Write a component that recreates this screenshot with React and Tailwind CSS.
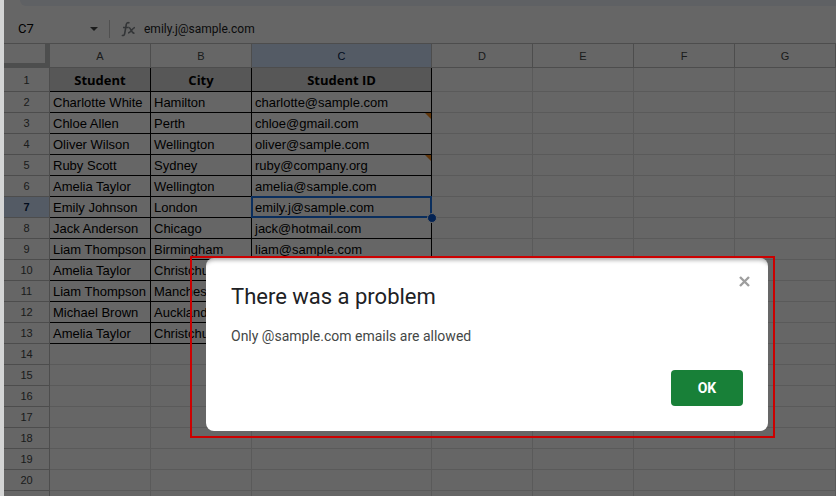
import { useState } from "react";

const columns = ["A", "B", "C", "D", "E", "F", "G"];

const students = [
  { name: "Charlotte White", city: "Hamilton", email: "charlotte@sample.com" },
  { name: "Chloe Allen", city: "Perth", email: "chloe@gmail.com", invalid: true },
  { name: "Oliver Wilson", city: "Wellington", email: "oliver@sample.com" },
  { name: "Ruby Scott", city: "Sydney", email: "ruby@company.org", invalid: true },
  { name: "Amelia Taylor", city: "Wellington", email: "amelia@sample.com" },
  { name: "Emily Johnson", city: "London", email: "emily.j@sample.com", selected: true },
  { name: "Jack Anderson", city: "Chicago", email: "jack@hotmail.com" },
  { name: "Liam Thompson", city: "Birmingham", email: "liam@sample.com" },
  { name: "Amelia Taylor", city: "Christchurch", email: "" },
  { name: "Liam Thompson", city: "Manchester", email: "" },
  { name: "Michael Brown", city: "Auckland", email: "" },
  { name: "Amelia Taylor", city: "Christchurch", email: "" },
];

const emptyRows = [14, 15, 16, 17, 18, 19, 20, ""];

const headCell = "border-r border-b border-[#c0c0c0] p-0 text-center text-[11px] leading-[16px]";
const filled = "border-r border-b border-black pt-[2px] pb-0 pl-[3px] text-[13px] leading-[16px] whitespace-nowrap";
const blank = "border-r border-b border-[#e1e1e1] p-0";

function RowNumber({ value, active }) {
  return (
    <th
      scope="row"
      className={
        active
          ? `${headCell} bg-[#d3e3fd] font-bold text-[#041e49]`
          : `${headCell} font-normal text-[#444746]`
      }
    >
      {value}
    </th>
  );
}

function Blanks({ count }) {
  return Array.from({ length: count }, (_, i) => <td key={i} className={blank}></td>);
}

function FormulaBar() {
  return (
    <div>
      <div className="ml-4 h-[6px] rounded-bl-full bg-[#edf2fa]"></div>
      <div className="flex h-[37px] items-center pt-[9px]">
        <div className="flex h-[18px] w-[106px] items-center border-r border-[#c7c7c7]">
          <input
            aria-label="Name box"
            defaultValue="C7"
            className="w-[70px] pl-[14px] font-[Roboto,sans-serif] text-[13px] text-black"
          />
          <button aria-label="Named ranges" className="ml-4">
            <svg width="8" height="4" viewBox="0 0 8 4" fill="#444746">
              <path d="M0 0h8L4 4z" />
            </svg>
          </button>
        </div>
        <svg className="ml-[11px]" width="15" height="16" viewBox="0 0 15 16" fill="none" stroke="#80868b" strokeWidth="1.600">
          <path d="M8.500 2C6.500 1 5.500 2 5.200 4L3.700 12.500C3.400 14.400 2.300 15 .8 14.200M2 6.500h5.500" />
          <path d="M7.500 6.500c2.500-.8 2.500 6.500 6 5.500M14 6.500c-2.500 0-4 5.500-7 5.500" />
        </svg>
        <input
          aria-label="Formula"
          defaultValue="emily.j@sample.com"
          className="ml-2 min-w-0 flex-1 font-[Roboto,sans-serif] text-[12px] text-[#202124]"
        />
      </div>
    </div>
  );
}

function Sheet() {
  return (
    <table className="w-full table-fixed border-separate border-spacing-0 border-t border-[#c0c0c0] text-black">
      <colgroup>
        <col className="w-[46px]" />
        <col className="w-[101px]" />
        <col className="w-[101px]" />
        <col className="w-[180px]" />
        <col className="w-[101px]" />
        <col className="w-[101px]" />
        <col className="w-[101px]" />
        <col />
      </colgroup>
      <thead>
        <tr className="h-6">
          <td className="border-r-[5px] border-b-[5px] border-[#c0c4c2] p-0"></td>
          {columns.map((c) => (
            <th
              key={c}
              scope="col"
              className={
                c === "C"
                  ? `${headCell} bg-[#d3e3fd] font-normal text-[#041e49]`
                  : `${headCell} font-normal text-[#444746]`
              }
            >
              {c}
            </th>
          ))}
        </tr>
      </thead>
      <tbody>
        <tr className="h-6">
          <RowNumber value={1} />
          {["Student", "City", "Student ID"].map((h) => (
            <td
              key={h}
              className="border-r border-b border-black bg-[#d9d9d9] p-0 text-center font-['Open_Sans',sans-serif] text-[13px] leading-[20px] font-bold"
            >
              {h}
            </td>
          ))}
          <Blanks count={4} />
        </tr>

        {students.map((s, i) => (
          <tr key={i} className="h-[21px]">
            <RowNumber value={i + 2} active={s.selected} />
            <td className={filled}>{s.name}</td>
            <td className={filled}>{s.city}</td>
            <td className={`${filled} relative`}>
              {s.email}
              {s.invalid && (
                <span className="absolute top-0 right-0 border-t-[6px] border-l-[6px] border-t-[#f28b20] border-l-transparent"></span>
              )}
              {s.selected && (
                <span className="absolute -inset-px z-10 border-2 border-[#1a73e8]">
                  <span className="absolute -right-[7px] -bottom-[7px] size-[10px] rounded-full border border-white bg-[#0b57d0]"></span>
                </span>
              )}
            </td>
            <Blanks count={4} />
          </tr>
        ))}

        {emptyRows.map((n) => (
          <tr key={n} className="h-[21px]">
            <RowNumber value={n} />
            <Blanks count={7} />
          </tr>
        ))}
      </tbody>
    </table>
  );
}

function ProblemDialog({ onClose }) {
  return (
    <div className="absolute top-[256px] left-[190px] z-30 w-[585px] border-2 border-[#cc0000] pr-[5px] pb-[5px] pl-[14px]">
      <div
        role="alertdialog"
        aria-labelledby="problem-title"
        className="relative rounded-lg bg-white p-[25px] font-[Roboto,sans-serif] shadow-[inset_0_6px_4px_-4px_rgba(0,0,0,0.35)]"
      >
        <button aria-label="Close" onClick={onClose} className="absolute top-[18px] right-[18px]">
          <svg width="11" height="11" viewBox="0 0 11 11" stroke="#9e9e9e" strokeWidth="2.400">
            <path d="M1 1l9 9M10 1l-9 9" />
          </svg>
        </button>
        <h2 id="problem-title" className="text-[22px] leading-[28px] text-[#202124]">
          There was a problem
        </h2>
        <p className="mt-[15px] text-[14px] leading-[20px] text-[#444746]">
          Only @sample.com emails are allowed
        </p>
        <div className="mt-6 flex justify-end">
          <button
            onClick={onClose}
            className="h-9 w-[72px] rounded bg-[#188038] text-[14px] font-bold text-white"
          >
            OK
          </button>
        </div>
      </div>
    </div>
  );
}

export default function App() {
  const [open, setOpen] = useState(true);

  return (
    <div className="relative flex h-screen overflow-hidden bg-white font-['Liberation_Sans',Arial,sans-serif]">
      <div className="w-1 shrink-0 bg-[#d4d5d5]"></div>
      <div className="relative min-w-0 flex-1 overflow-hidden">
        <FormulaBar />
        <Sheet />
        {open && <div className="absolute inset-0 z-20 bg-black/60"></div>}
      </div>
      {open && <ProblemDialog onClose={() => setOpen(false)} />}
    </div>
  );
}
